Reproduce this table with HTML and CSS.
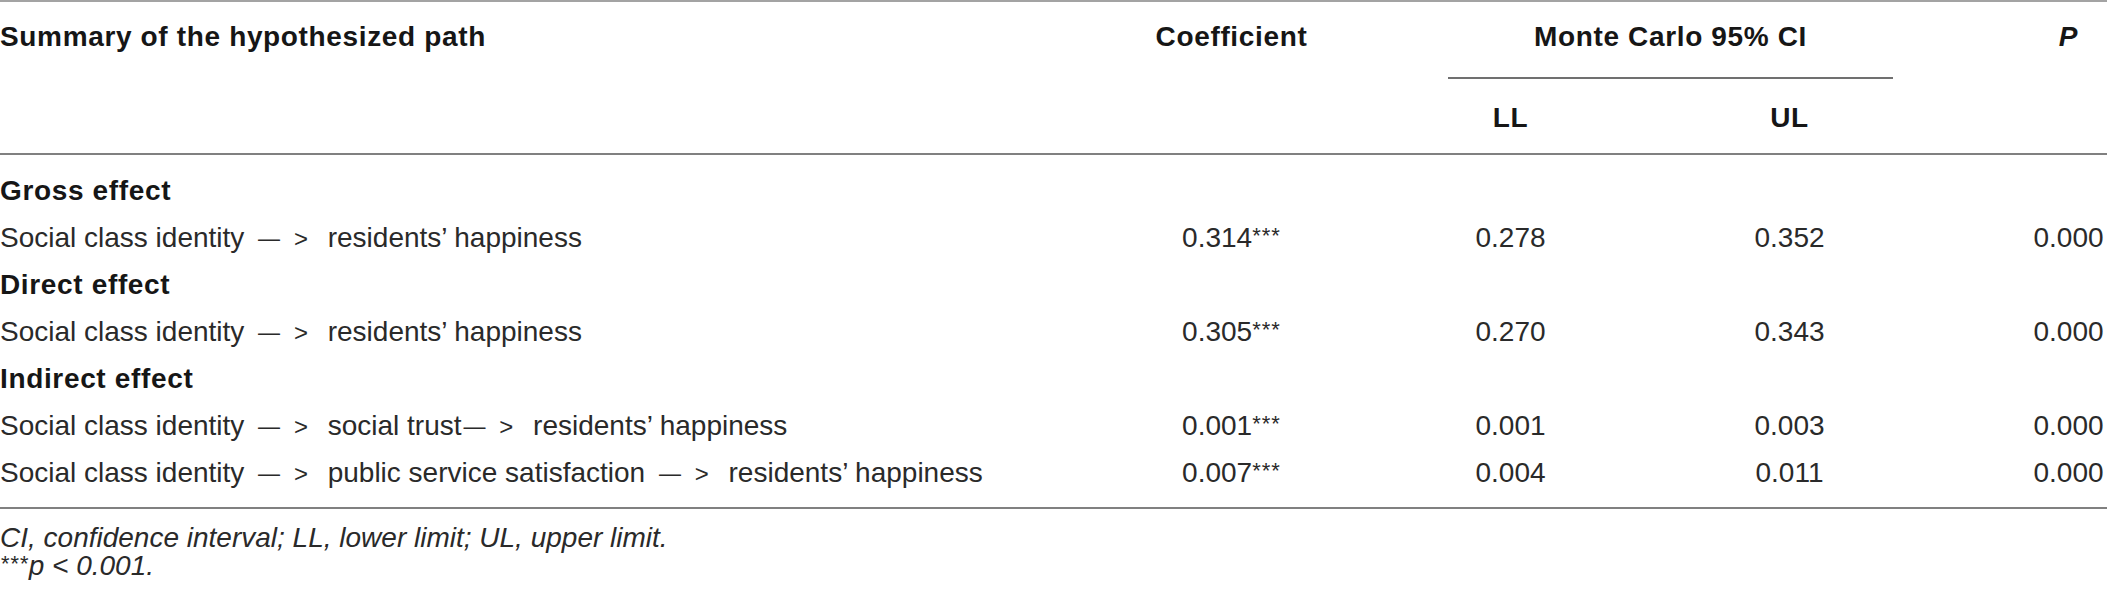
FILE: index.html
```html
<!DOCTYPE html>
<html lang="en">
<head>
<meta charset="utf-8">
<title>Summary of the hypothesized path</title>
<link rel="stylesheet" href="styles.css">
</head>
<body>
<div class="table">
  <div class="thead">
    <div class="h-path">Summary of the hypothesized path</div>
    <div class="h-coef">Coefficient</div>
    <div class="h-mc">Monte Carlo 95% CI</div>
    <div class="h-p"><em>P</em></div>
    <div class="h-ll">LL</div>
    <div class="h-ul">UL</div>
  </div>
  <div class="tbody">
    <div class="row"><div class="section">Gross effect</div></div>
    <div class="row">
      <div class="path">Social class identity <span class="dash">—</span> <span class="gt">&gt;</span> residents’ happiness</div>
      <div class="num">0.314<sup class="stars">***</sup></div>
      <div class="num">0.278</div>
      <div class="num">0.352</div>
      <div class="num">0.000</div>
    </div>
    <div class="row"><div class="section">Direct effect</div></div>
    <div class="row">
      <div class="path">Social class identity <span class="dash">—</span> <span class="gt">&gt;</span> residents’ happiness</div>
      <div class="num">0.305<sup class="stars">***</sup></div>
      <div class="num">0.270</div>
      <div class="num">0.343</div>
      <div class="num">0.000</div>
    </div>
    <div class="row"><div class="section">Indirect effect</div></div>
    <div class="row">
      <div class="path">Social class identity <span class="dash">—</span> <span class="gt">&gt;</span> social trust<span class="dash tight">—</span> <span class="gt">&gt;</span> residents’ happiness</div>
      <div class="num">0.001<sup class="stars">***</sup></div>
      <div class="num">0.001</div>
      <div class="num">0.003</div>
      <div class="num">0.000</div>
    </div>
    <div class="row">
      <div class="path">Social class identity <span class="dash">—</span> <span class="gt">&gt;</span> public service satisfaction <span class="dash">—</span> <span class="gt">&gt;</span> residents’ happiness</div>
      <div class="num">0.007<sup class="stars">***</sup></div>
      <div class="num">0.004</div>
      <div class="num">0.011</div>
      <div class="num">0.000</div>
    </div>
  </div>
  <div class="foot">
    <p class="note">CI, confidence interval; LL, lower limit; UL, upper limit.</p>
    <p class="note"><sup class="stars">***</sup>p &lt; 0.001.</p>
  </div>
</div>
</body>
</html>
```
FILE: styles.css
```css
html, body {
  margin: 0;
  padding: 0;
  background: #ffffff;
  overflow: hidden;
}

body {
  font-family: "Liberation Sans", Arial, Helvetica, sans-serif;
  font-size: 28px;
  color: #2a2a2a;
}

.table {
  width: 2209px;
}

.thead {
  display: grid;
  grid-template-columns: 1092px 279px 279px 279px 279px;
  grid-template-rows: auto auto;
  border-top: 2px solid #a3a3a3;
  border-bottom: 2px solid #808080;
  font-weight: bold;
  color: #161616;
  letter-spacing: 0.65px;
  line-height: 47px;
}

.h-path {
  grid-column: 1;
  grid-row: 1 / span 2;
  padding-top: 11px;
}

.h-coef {
  grid-column: 2;
  grid-row: 1;
  padding-top: 11px;
  text-align: center;
}

.h-mc {
  grid-column: 3 / span 2;
  grid-row: 1;
  padding-top: 11px;
  padding-bottom: 17px;
  margin: 0 36px 0 77px;
  border-bottom: 2px solid #707070;
  text-align: center;
}

.h-p {
  grid-column: 5;
  grid-row: 1;
  padding-top: 11px;
  text-align: center;
}

.h-p em {
  font-style: italic;
}

.h-ll,
.h-ul {
  grid-row: 2;
  padding-top: 15px;
  padding-bottom: 12px;
  text-align: center;
}

.h-ll { grid-column: 3; }
.h-ul { grid-column: 4; }

.tbody {
  padding: 12px 0 11px;
  border-bottom: 2px solid #808080;
}

.row {
  display: grid;
  grid-template-columns: 1092px 279px 279px 279px 279px;
  line-height: 47px;
  height: 47px;
}

.section {
  font-weight: bold;
  color: #161616;
  letter-spacing: 0.65px;
}

.path {
  white-space: nowrap;
}

.dash {
  font-size: 22px;
  margin: 0 6px 0 6px;
  vertical-align: 1px;
}

.dash.tight {
  margin-left: 2px;
}

.gt {
  font-size: 24px;
  margin-right: 12px;
}

.num {
  text-align: center;
  white-space: nowrap;
}

.stars {
  font-size: 22px;
  letter-spacing: 1px;
  line-height: 0;
  vertical-align: 4px;
}

.foot {
  padding-top: 15px;
}

.note {
  margin: 0;
  font-style: italic;
  line-height: 28px;
  color: #2a2a2a;
}
```
